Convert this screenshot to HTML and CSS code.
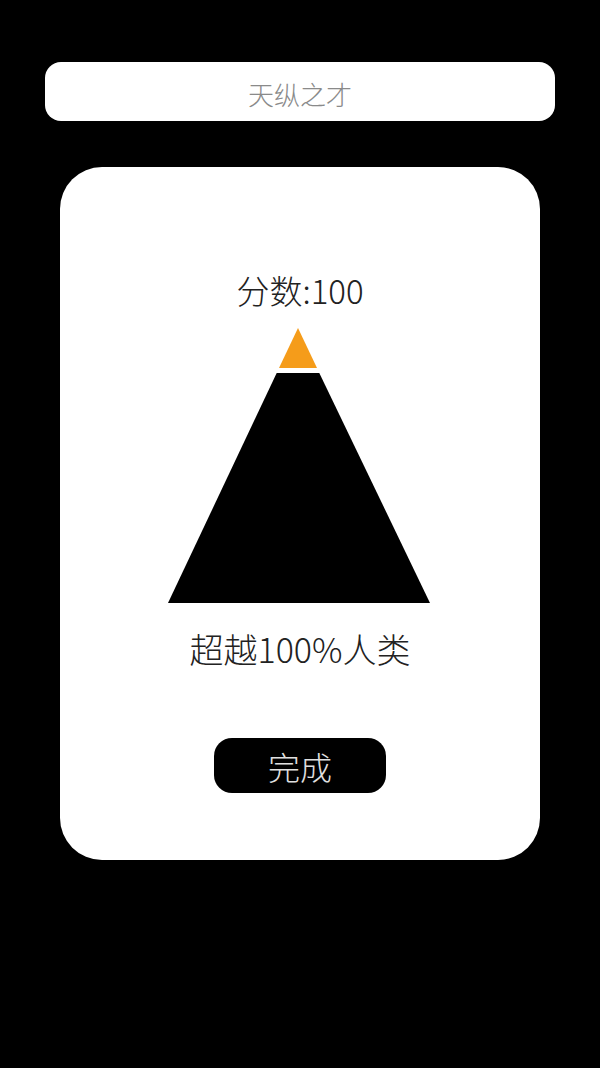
FILE: index.html
```html
<!DOCTYPE html>
<html lang="zh">
<head>
<meta charset="utf-8">
<link rel="stylesheet" href="styles.css">
</head>
<body>
<div class="screen">
  <div class="title-bar">天纵之才</div>
  <div class="card">
    <div class="score">分数:100</div>
    <svg class="pyramid" width="262" height="276" viewBox="0 0 262 276">
      <polygon points="130,0 149,40 111,40" fill="#f59c1a"/>
      <polygon points="108.7,45 151.3,45 262,275 0,275" fill="#000"/>
    </svg>
    <div class="beat">超越100%人类</div>
    <button class="done">完成</button>
  </div>
</div>
</body>
</html>
```
FILE: styles.css
```css
html, body {
  margin: 0;
  padding: 0;
  background: #000;
}
body {
  width: 600px;
  height: 1068px;
  font-family: "Noto Sans CJK SC", "Noto Sans", sans-serif;
}
.screen {
  display: flex;
  flex-direction: column;
  padding-top: 62px;
}
.title-bar {
  margin: 0 45px;
  height: 59px;
  background: #fff;
  border-radius: 16px;
  display: flex;
  align-items: center;
  justify-content: center;
  color: #8a8a8a;
  font-size: 26px;
  font-weight: 300;
  padding-top: 3px;
  box-sizing: border-box;
}
.card {
  margin: 46px 60px 0;
  height: 693px;
  background: #fff;
  border-radius: 42px;
  display: flex;
  flex-direction: column;
  align-items: center;
  padding-top: 103px;
  box-sizing: border-box;
}
.score {
  font-size: 33px;
  line-height: 40px;
  color: #222;
  font-weight: 300;
}
.pyramid {
  display: block;
  margin-top: 18px;
  margin-left: -2px;
}
.beat {
  margin-top: 25px;
  font-size: 34px;
  line-height: 40px;
  color: #222;
  font-weight: 300;
}
.done {
  margin-top: 69px;
  width: 172px;
  height: 55px;
  border: none;
  border-radius: 18px;
  background: #000;
  color: #e0e0e0;
  font-family: "Noto Sans CJK SC", sans-serif;
  font-size: 32px;
  font-weight: 300;
  padding: 0;
}
```
